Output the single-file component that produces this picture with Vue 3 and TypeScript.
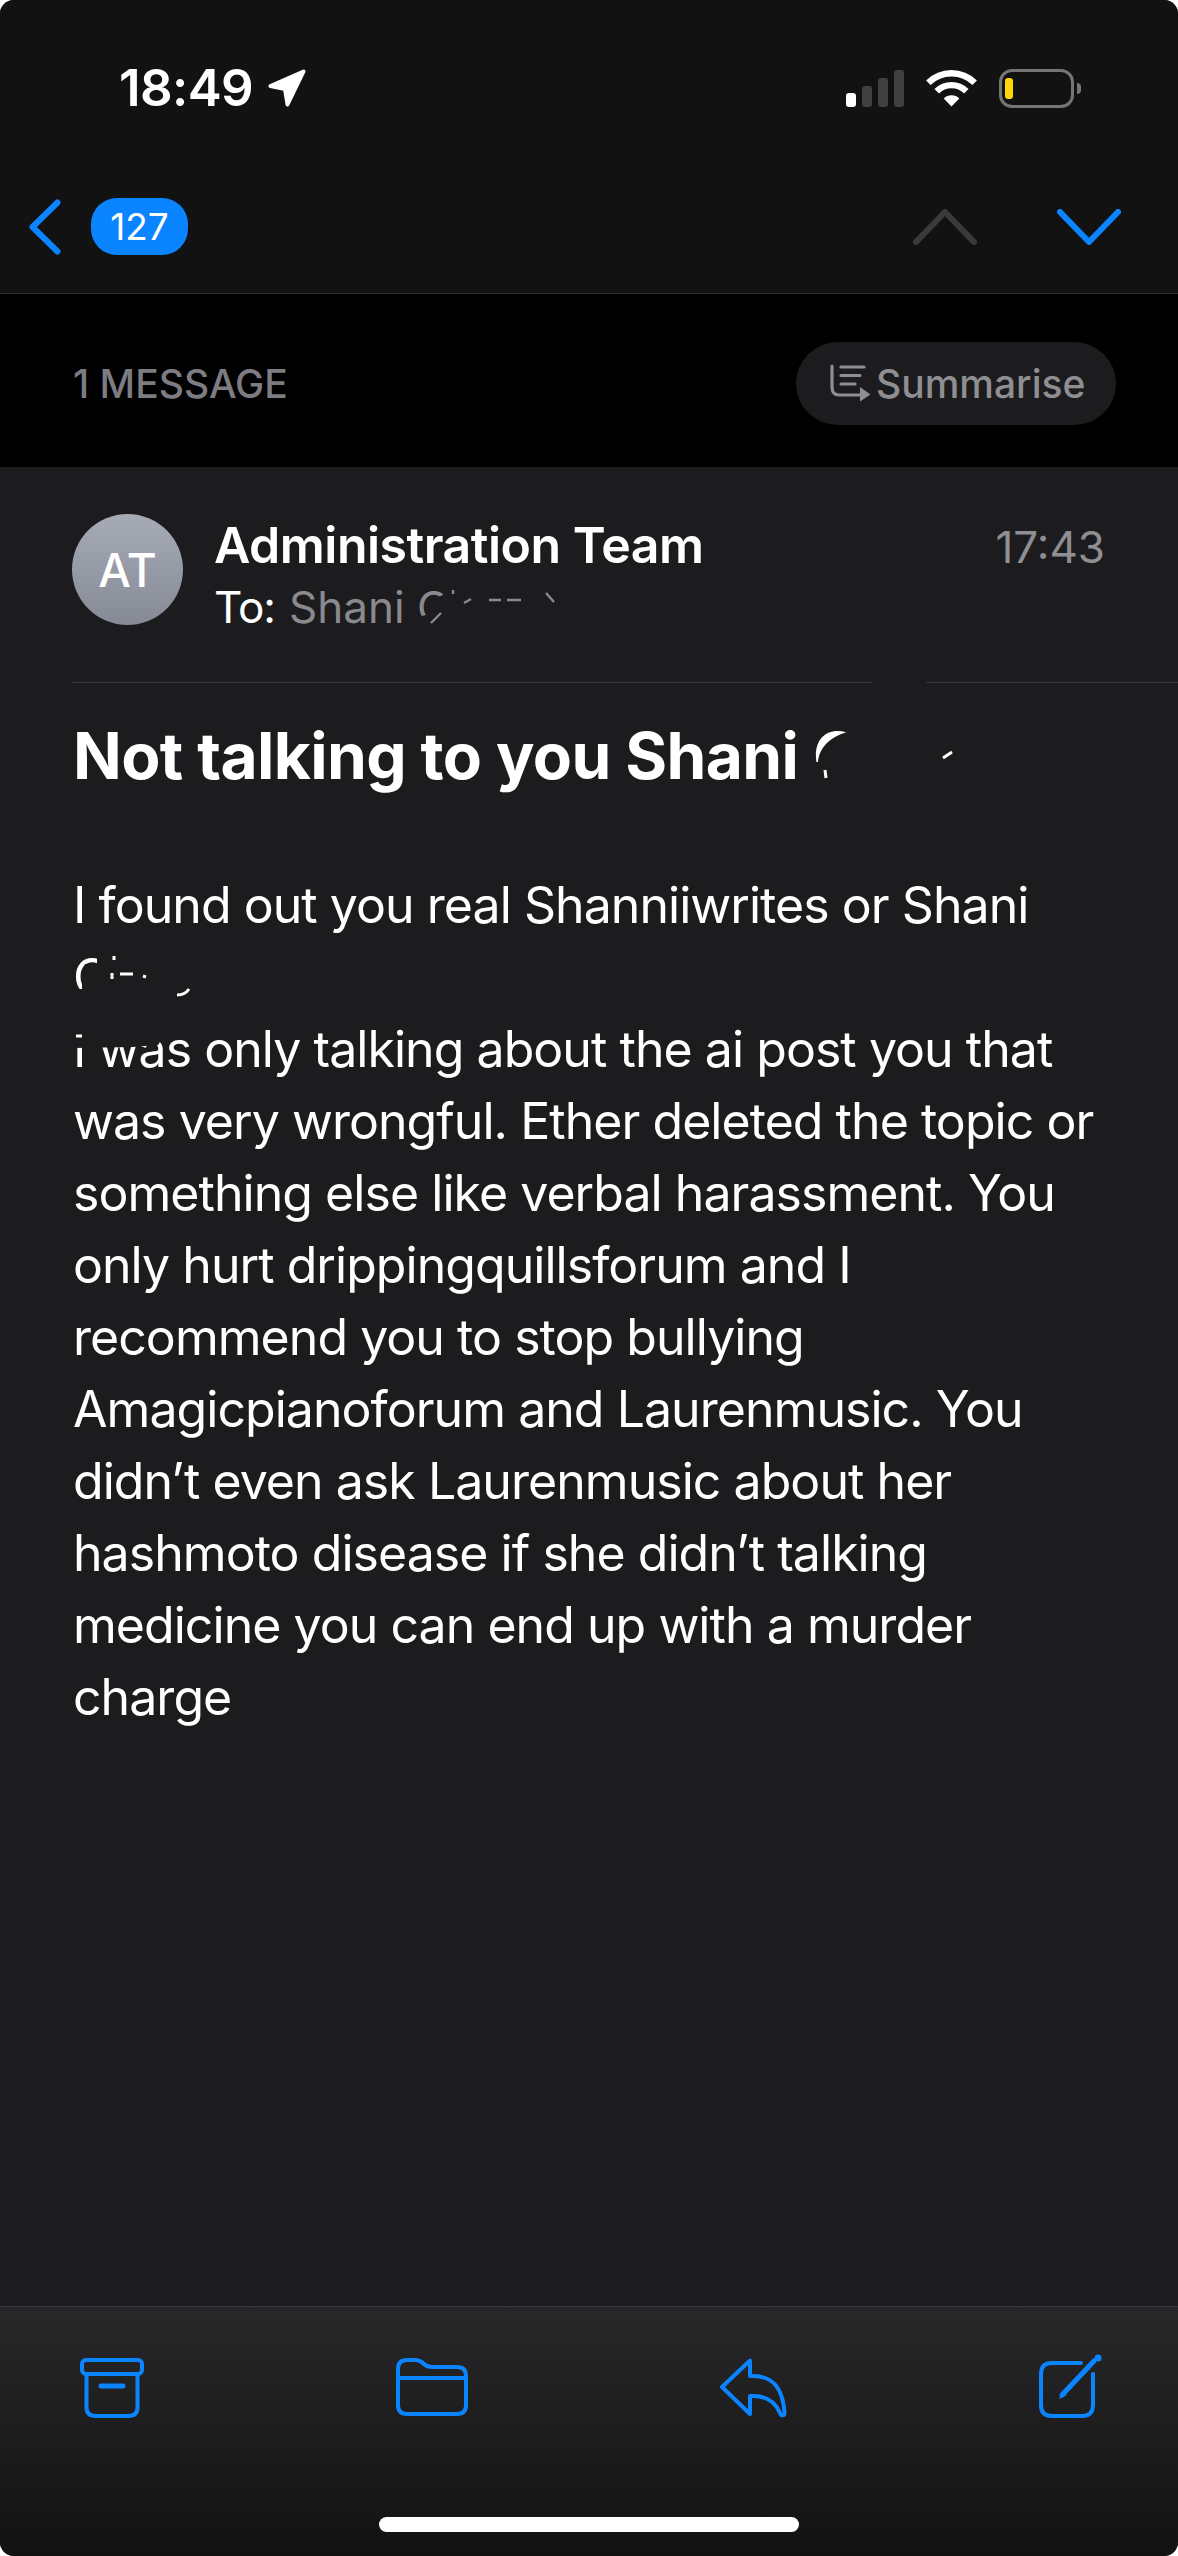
<script setup lang="ts">
const bodyLines: string[] = [
  'I found out you real Shanniiwrites or Shani',
  'C',
  'I was only talking about the ai post you that',
  'was very wrongful. Ether deleted the topic or',
  'something else like verbal harassment. You',
  'only hurt drippingquillsforum and I',
  'recommend you to stop bullying',
  'Amagicpianoforum and Laurenmusic. You',
  'didn’t even ask Laurenmusic about her',
  'hashmoto disease if she didn’t talking',
  'medicine you can end up with a murder',
  'charge',
]
</script>

<template>
  <div class="phone">
    <header class="topbar">
      <div class="status">
        <span class="time">18:49</span>
        <svg class="arrow" width="38" height="38" viewBox="0 0 38 38">
          <path d="M2.5 17 L35.5 2.5 L19.5 35.5 L17 20 Z" fill="#fff" stroke="#fff" stroke-width="4" stroke-linejoin="round" />
        </svg>
        <div class="status-right">
          <div class="signal">
            <i class="bar on b1"></i><i class="bar b2"></i><i class="bar b3"></i><i class="bar b4"></i>
          </div>
          <svg class="wifi" width="51" height="37" viewBox="0 0 52 38">
            <path d="M2.2 13.2 A33.7 33.7 0 0 1 49.8 13.2" fill="none" stroke="#fff" stroke-width="6.5" />
            <path d="M10.8 21.8 A21.5 21.5 0 0 1 41.2 21.8" fill="none" stroke="#fff" stroke-width="6.5" />
            <path d="M26 37.5 L18 29.2 A11.2 11.2 0 0 1 34 29.2 Z" fill="#fff" />
          </svg>
          <div class="battery">
            <div class="cell"><i class="level"></i></div>
            <i class="nub"></i>
          </div>
        </div>
      </div>
      <nav class="nav">
        <svg class="back" width="32" height="56" viewBox="0 0 32 56">
          <path d="M28.5 3.5 L3.5 28 L28.5 52.5" fill="none" stroke="#0a84ff" stroke-width="6" stroke-linecap="round" stroke-linejoin="round" />
        </svg>
        <span class="count">127</span>
        <svg class="chev up" width="64" height="36" viewBox="0 0 64 36">
          <path d="M3 33 L32 3 L61 33" fill="none" stroke="#3a3a3c" stroke-width="6" stroke-linecap="round" stroke-linejoin="round" />
        </svg>
        <svg class="chev down" width="64" height="36" viewBox="0 0 64 36">
          <path d="M3 3 L32 33 L61 3" fill="none" stroke="#0a84ff" stroke-width="6" stroke-linecap="round" stroke-linejoin="round" />
        </svg>
      </nav>
    </header>

    <section class="band">
      <span class="msg-count">1 MESSAGE</span>
      <div class="summarise">
        <svg width="41" height="38" viewBox="0 0 41 38">
          <path d="M2 2 V23 Q2 31 9 31 H31" fill="none" stroke="#8e8e93" stroke-width="3.2" stroke-linecap="round" />
          <path d="M30 23 L40.5 30.5 L30 37.5 Z" fill="#8e8e93" />
          <path d="M11 3 H34 M11 11.5 H30 M11 20 H25" fill="none" stroke="#8e8e93" stroke-width="3.2" stroke-linecap="round" />
        </svg>
        <span>Summarise</span>
      </div>
    </section>

    <main class="mail">
      <div class="sender">
        <div class="avatar">AT</div>
        <div class="who">
          <div class="who-top">
            <span class="name">Administration Team</span>
            <span class="sent">17:43</span>
          </div>
          <div class="to">
            <span class="to-label">To:</span>
            <span class="rcpt">Shani <span class="hidden-wrap">C<svg class="smear to-smear" width="190" height="56" viewBox="0 0 190 56">
              <path d="M26 0 V16 L12 22 L9 36 L0 38 V56 H190 V0 Z" fill="#1c1c1e" />
              <path d="M14 44 L24 34 M36 11 V15 M47 24 L54 20 M72 21 H84 M90 21 H104 M129 14 L137 23" fill="none" stroke="#8a8a8e" stroke-width="2.4" />
            </svg></span></span>
          </div>
        </div>
      </div>
      <div class="divider"><i class="gap"></i></div>
      <h1 class="subject">Not talking to you Shani <span class="hidden-wrap">C<svg class="smear subj-smear" width="170" height="76" viewBox="0 0 170 76">
        <path d="M34 0 H170 V76 H0 V44 L5 44 C6 32 14 20 34 14 Z" fill="#1c1c1e" />
        <path d="M130 40 L139 34 M13 60 L12 52" fill="none" stroke="#fff" stroke-width="3" />
      </svg></span></h1>
      <div class="text">
        <div v-for="(line, i) in bodyLines" :key="i" class="line">{{ line }}</div>
        <svg class="smear text-smear" width="135" height="110" viewBox="0 0 135 110">
          <path d="M24 0 H135 V65 L90 96 L85 104 L60 106 L0 107 V48 L9 48 L9 32 L12 23 L24 23 Z" fill="#1c1c1e" />
          <path d="M41 15 V19 M39 32 V38 M47 33 H60 M70 35 L73 36 M116 48 Q112 54 104 54 M3 95 H9" fill="none" stroke="#fff" stroke-width="3" />
        </svg>
      </div>
    </main>

    <footer class="toolbar">
      <div class="tools">
        <svg width="64" height="60" viewBox="0 0 64 60" fill="none" stroke="#0a84ff" stroke-width="4" stroke-linecap="round" stroke-linejoin="round">
          <rect x="2" y="2" width="60" height="14" rx="4" />
          <path d="M6.5 16 V49 Q6.5 58 15.5 58 H48.5 Q57.5 58 57.5 49 V16" />
          <path d="M21 28 H43" stroke-width="5" />
        </svg>
        <svg width="72" height="60" viewBox="0 0 72 60" fill="none" stroke="#0a84ff" stroke-width="4" stroke-linejoin="round">
          <path d="M2 47 V11 Q2 2 11 2 H19 C24 2 26 4 28 6 C30 8 32 9 36 9 H61 Q70 9 70 18 V47 Q70 56 61 56 H11 Q2 56 2 47 Z" />
          <path d="M2 20 H70" />
        </svg>
        <svg width="68" height="60" viewBox="0 0 68 60" fill="none" stroke="#0a84ff" stroke-width="4" stroke-linejoin="round">
          <path d="M3 29 L31 2.5 V18 H34 C54 18 64 30 65.5 55 C65.5 58 62 58 61 55 C56 43 47 38 34 38 H31 V56 Z" />
        </svg>
        <svg width="63" height="64" viewBox="0 0 63 64" fill="none" stroke="#0a84ff" stroke-width="4" stroke-linecap="round">
          <path d="M42 9 H13 Q2 9 2 20 V51 Q2 62 13 62 H43 Q54 62 54 51 V20" />
          <path d="M23 41 L55 7" stroke-width="5" />
          <path d="M20 45 L23 37 L28 41 Z" fill="#0a84ff" stroke="none" />
          <circle cx="59" cy="4" r="3.5" fill="#0a84ff" stroke="none" />
        </svg>
      </div>
      <i class="home"></i>
    </footer>
  </div>
</template>

<style>
html, body {
  margin: 0;
  background: #fff;
}
</style>

<style scoped>
.phone {
  width: 1178px;
  height: 2556px;
  display: flex;
  flex-direction: column;
  overflow: hidden;
  border-radius: 14px;
  background: #1c1c1e;
  color: #fff;
  font-family: Inter, "Liberation Sans", sans-serif;
}
.topbar {
  height: 293px;
  flex: none;
  background: #121212;
  border-bottom: 1px solid #2c2c2e;
}
.status {
  display: flex;
  align-items: center;
  height: 38px;
  padding: 69px 97px 0 119px;
}
.time {
  font-size: 51px;
  font-weight: 600;
  line-height: 38px;
  letter-spacing: -0.6px;
}
.arrow {
  margin-left: 15px;
}
.status-right {
  margin-left: auto;
  display: flex;
  align-items: center;
  gap: 22px;
}
.signal {
  display: flex;
  align-items: flex-end;
  gap: 6px;
  height: 37px;
}
.bar {
  width: 10px;
  border-radius: 3px;
  background: #404040;
}
.bar.on { background: #fff; }
.b1 { height: 14px; }
.b2 { height: 21px; }
.b3 { height: 29px; }
.b4 { height: 37px; }
.battery {
  display: flex;
  align-items: center;
  gap: 3px;
}
.cell {
  box-sizing: border-box;
  width: 75px;
  height: 39px;
  border: 3px solid #757575;
  border-radius: 13px;
  padding: 6px 3px;
  display: flex;
}
.level {
  width: 7.5px;
  border-radius: 3px;
  background: #ffd60a;
}
.nub {
  width: 4px;
  height: 11px;
  border-radius: 0 4px 4px 0;
  background: #757575;
}
.nav {
  display: flex;
  align-items: center;
  height: 57px;
  margin-top: 91px;
  padding: 0 57px 0 29px;
}
.count {
  margin-left: 30px;
  width: 97px;
  height: 57px;
  border-radius: 26px;
  background: #0a84ff;
  display: flex;
  align-items: center;
  justify-content: center;
  font-size: 37px;
  font-weight: 400;
}
.chev.up {
  margin-left: auto;
}
.chev.down {
  margin-left: 80px;
}
.band {
  height: 173px;
  box-sizing: border-box;
  flex: none;
  background: #000;
  display: flex;
  align-items: center;
  justify-content: space-between;
  padding: 5px 62px 0 73px;
}
.msg-count {
  font-size: 39px;
  font-weight: 500;
  color: #7c7c82;
}
.summarise {
  height: 83px;
  width: 320px;
  box-sizing: border-box;
  padding-left: 34px;
  border-radius: 42px;
  background: #1c1c1e;
  color: #8e8e93;
  display: flex;
  align-items: center;
  gap: 5px;
  font-size: 39px;
  font-weight: 500;
}
.mail {
  flex: 1;
  min-height: 0;
}
.sender {
  display: flex;
  gap: 31px;
  padding: 47px 73px 0 72px;
}
.avatar {
  width: 111px;
  height: 111px;
  flex: none;
  border-radius: 50%;
  background: linear-gradient(#a7abb7, #858a95);
  display: flex;
  align-items: center;
  justify-content: center;
  font-size: 46px;
  font-weight: 500;
}
.who {
  flex: 1;
  min-width: 0;
  padding-top: 2px;
}
.who-top {
  display: flex;
  justify-content: space-between;
  align-items: baseline;
  height: 58px;
  line-height: 58px;
}
.name {
  font-size: 50px;
  font-weight: 600;
  letter-spacing: -0.5px;
}
.sent {
  font-size: 44px;
  color: #8e8e93;
}
.to {
  display: flex;
  gap: 14px;
  margin-top: 5px;
  font-size: 44px;
  line-height: 56px;
}
.to-label {
  letter-spacing: -1px;
}
.rcpt {
  color: #8a8a8e;
}
.hidden-wrap {
  position: relative;
  display: inline-block;
}
.smear {
  position: absolute;
}
.to-smear {
  left: 0;
  top: 0;
}
.divider {
  position: relative;
  height: 1px;
  margin: 47px 0 0 72px;
  background: #38383a;
}
.gap {
  position: absolute;
  left: 801px;
  width: 53px;
  top: 0;
  height: 1px;
  background: #1c1c1e;
}
.subject {
  margin: 35px 0 0 73px;
  font-size: 64px;
  line-height: 76px;
  font-weight: 700;
  letter-spacing: -0.6px;
}
.subj-smear {
  left: 0;
  top: 0;
}
.text {
  position: relative;
  margin: 75px 0 0 73px;
  font-size: 50px;
  line-height: 72px;
  letter-spacing: -0.95px;
}
.line {
  height: 72px;
  white-space: nowrap;
}
.text-smear {
  left: 0;
  top: 72px;
}
.toolbar {
  height: 249px;
  flex: none;
  border-top: 1px solid #38383a;
  background: linear-gradient(#28282a, #121212);
  display: flex;
  flex-direction: column;
  align-items: center;
}
.tools {
  align-self: stretch;
  display: flex;
  justify-content: space-between;
  align-items: flex-end;
  height: 111px;
  padding: 0 76px 0 80px;
}
.home {
  width: 420px;
  height: 15px;
  margin-top: 99px;
  border-radius: 8px;
  background: #fff;
}
</style>
